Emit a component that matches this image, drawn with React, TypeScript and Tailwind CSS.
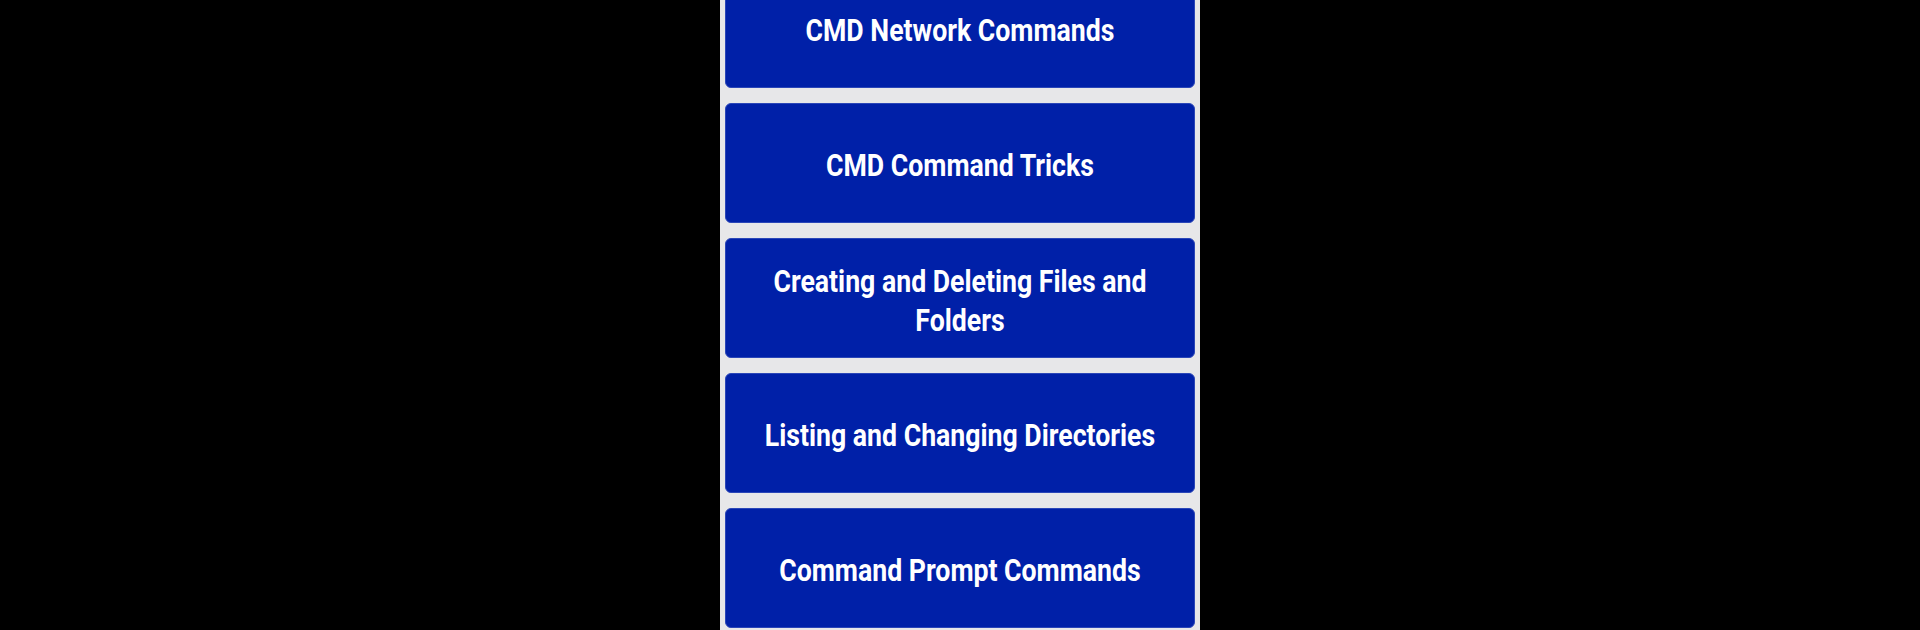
const items = [
  'CMD Network Commands',
  'CMD Command Tricks',
  'Creating and Deleting Files and Folders',
  'Listing and Changing Directories',
  'Command Prompt Commands',
];

export default function App() {
  return (
    <div className="flex h-[630px] w-full justify-center overflow-hidden bg-black">
      <div className="w-[480px] bg-[#e7e7e9] px-[5px]">
        <div className="-mt-[32px] flex flex-col gap-[15px]">
          {items.map((label) => (
            <button
              key={label}
              className="flex h-[120px] items-center justify-center overflow-hidden rounded-[6px] border border-[#2a46b8] bg-[#0020a8] pt-[5px] text-center"
            >
              {/* condensed face isn't installed, so squeeze Roboto */}
              <span className="inline-block w-[520px] shrink-0 scale-x-[0.86] font-['Roboto',sans-serif] text-[31px] font-bold leading-[39px] text-white">
                {label}
              </span>
            </button>
          ))}
        </div>
      </div>
    </div>
  );
}
